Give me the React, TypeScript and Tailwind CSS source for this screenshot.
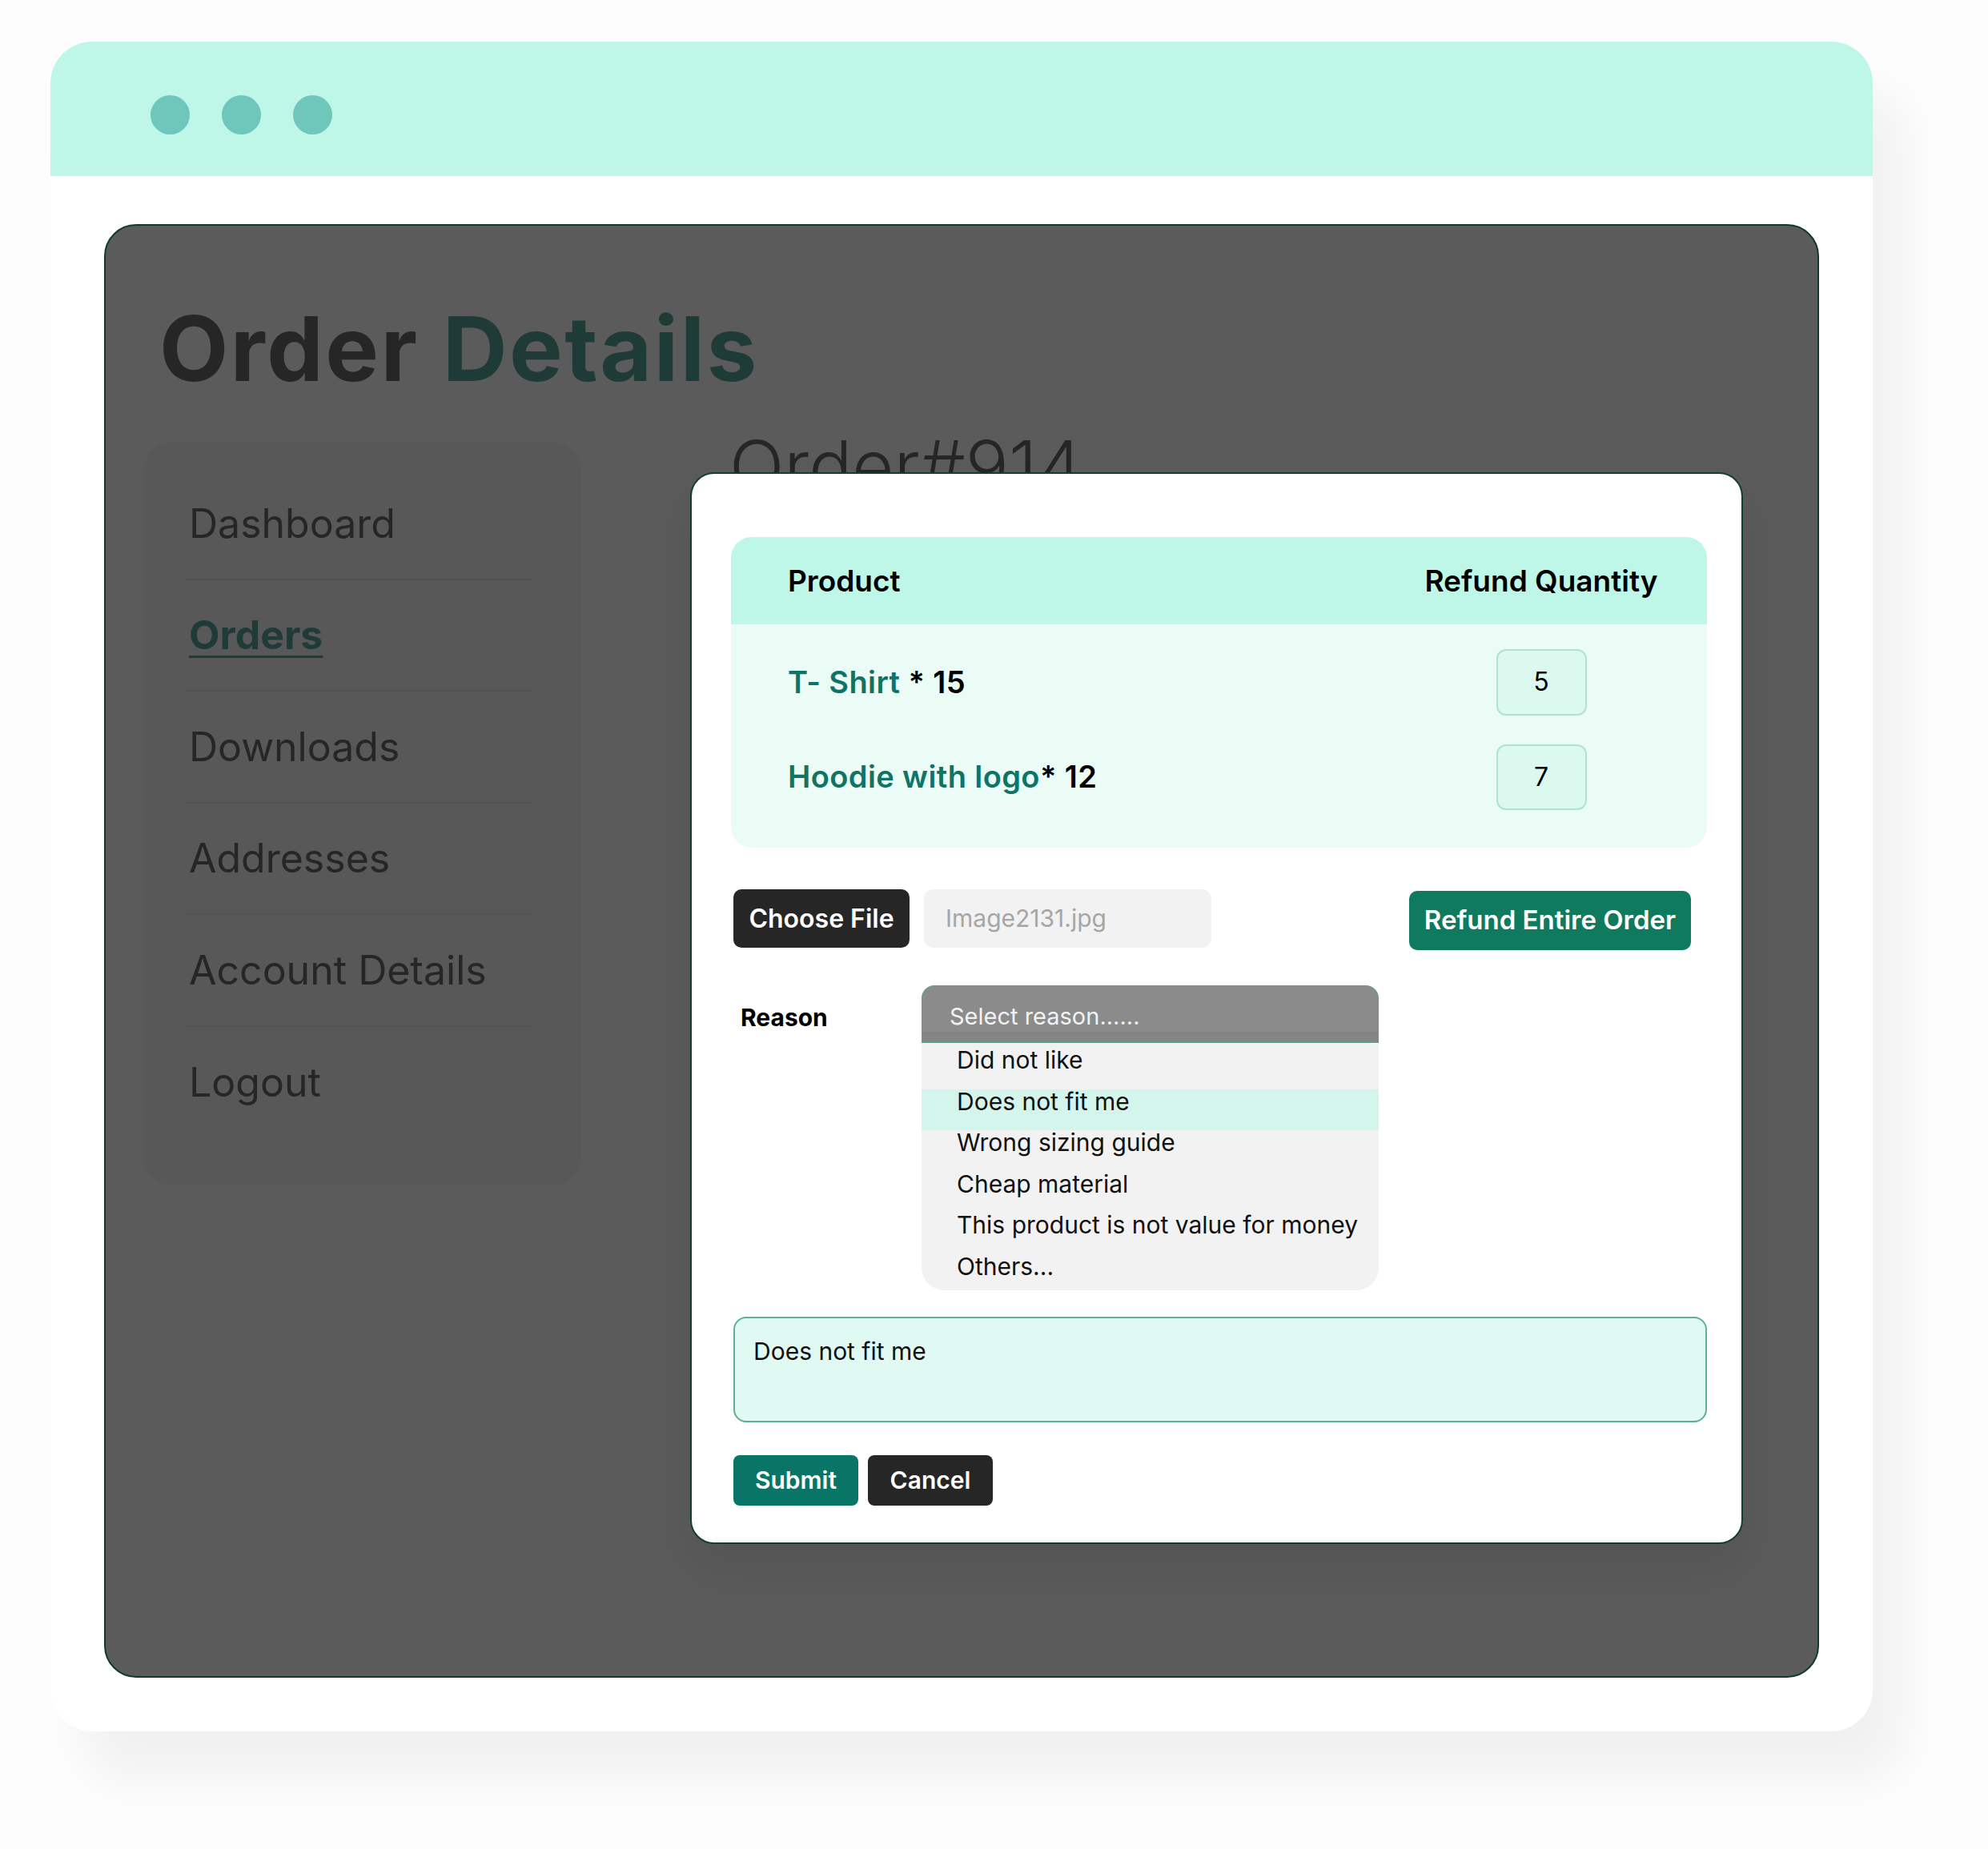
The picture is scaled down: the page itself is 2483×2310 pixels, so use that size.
const menu = ["Dashboard", "Orders", "Downloads", "Addresses", "Account Details", "Logout"];

const reasons = [
  "Did not like",
  "Does not fit me",
  "Wrong sizing guide",
  "Cheap material",
  "This product is not value for money",
  "Others...",
];

const items = [
  { name: "T- Shirt", qty: 15, refund: 5, sep: " * " },
  { name: "Hoodie with logo", qty: 12, refund: 7, sep: "* " },
];

export default function App() {
  return (
    <div className="w-[2483px] h-[2310px] bg-[#fdfdfd] pt-[52px] pl-[63px] font-[Inter,sans-serif]">
      {/* Browser window */}
      <div className="flex w-[2276px] h-[2111px] flex-col overflow-hidden rounded-[52px] bg-white shadow-[40px_60px_60px_rgba(0,0,0,0.05)]">
        <div className="flex h-[168px] shrink-0 items-center gap-[40px] bg-[#bef6e8] pl-[125px] pt-[14px]">
          <span className="h-[49px] w-[49px] rounded-full bg-[#6fc7bb]" />
          <span className="h-[49px] w-[49px] rounded-full bg-[#6fc7bb]" />
          <span className="h-[49px] w-[49px] rounded-full bg-[#6fc7bb]" />
        </div>

        <div className="flex-1 px-[67px] pt-[60px] pb-[67px]">
          {/* Dimmed page */}
          <div className="relative h-full rounded-[40px] border-2 border-[#0d3b2e] bg-[#5b5b5b] pl-[48px] pt-[97px]">
            <h1 className="ml-[19px] text-[112px] font-bold leading-none tracking-[2.5px] text-[#262626]">
              Order <span className="text-[#1f3b37]">Details</span>
            </h1>

            <div className="mt-[48px] flex items-start">
              <nav className="mt-[13px] h-[929px] w-[545px] rounded-[35px] bg-[#585858] pt-[33px] pl-[51px] pr-[60px]">
                {menu.map((m, i) => (
                  <div
                    key={m}
                    className={`flex h-[139.5px] items-center pl-[5px] ${i < menu.length - 1 ? "border-b-2 border-[#525252]" : ""}`}
                  >
                    {m === "Orders" ? (
                      <span className="text-[50px] font-bold leading-none text-[#1f3b37] underline decoration-[3px] underline-offset-[8px]">
                        {m}
                      </span>
                    ) : (
                      <span className="text-[50px] leading-none text-[#262626]">{m}</span>
                    )}
                  </div>
                ))}
              </nav>

              <div className="ml-[186px] -mt-[1px]">
                <h2 className="text-[90px] font-light leading-none text-[#262626]">Order#914</h2>
              </div>
            </div>

            {/* Refund modal */}
            <div className="absolute left-[730px] top-[308px] w-[1315px] rounded-[30px] border-2 border-[#143d33] bg-white pt-[79px] pl-[52px] pr-[43px] pb-[46px] shadow-[0_30px_60px_rgba(0,0,0,0.08)]">
              <div className="-ml-[3px] overflow-hidden rounded-[26px] bg-[#eafcf5]">
                <div className="flex h-[108.5px] items-center justify-between bg-[#bef6e8] pl-[71px] pr-[55px]">
                  <span className="text-[37px] font-semibold text-black">Product</span>
                  <span className="flex w-[304px] justify-center text-[37px] font-semibold text-black">Refund Quantity</span>
                </div>
                <div className="flex flex-col gap-[36px] pt-[31.5px] pb-[47px] pl-[71px] pr-[55px]">
                  {items.map((it) => (
                    <div key={it.name} className="flex h-[82.5px] items-center justify-between">
                      <span className="text-[38px] font-semibold tracking-[0.4px]">
                        <span className="text-[#0f7466]">{it.name}</span>
                        <span className="text-black">{it.sep}{it.qty}</span>
                      </span>
                      <div className="flex w-[304px] justify-center">
                        <div className="flex h-[82.5px] w-[113px] items-center justify-center rounded-[12px] border-2 border-[#ade3d2] bg-[#dcf9f0] text-[32px] text-black">
                          {it.refund}
                        </div>
                      </div>
                    </div>
                  ))}
                </div>
              </div>

              <div className="mt-[52px] flex items-start">
                <button className="h-[73px] w-[220px] rounded-[10px] bg-[#262626] text-[32px] font-semibold text-white">
                  Choose File
                </button>
                <div className="ml-[18px] flex h-[73px] w-[359px] items-center rounded-[12px] bg-[#f2f2f2] pl-[27px] text-[30px] text-[#a6a6a6]">
                  Image2131.jpg
                </div>
                <button className="ml-auto mr-[20px] mt-[2px] h-[74px] w-[352px] rounded-[10px] bg-[#0f7a5e] text-[33px] font-semibold text-white">
                  Refund Entire Order
                </button>
              </div>

              <div className="mt-[44px] flex">
                <div className="flex h-[72px] w-[235px] items-center pl-[9px] pt-[8px] text-[30px] font-bold text-black">Reason</div>
                <div className="w-[571px]">
                  <div className="flex h-[72px] items-center rounded-t-[16px] border border-b-2 border-[#5f9e8c] bg-[linear-gradient(to_bottom,#8b8b8b_0,#8b8b8b_57px,#848484_57px)] pl-[34px] pt-[6px] text-[29px] text-[#f2f2f2]">
                    Select reason......
                  </div>
                  <div className="h-[309px] overflow-hidden rounded-b-[28px] border-t border-white bg-[#f2f2f2] pt-[5px]">
                    {reasons.map((r) => (
                      <div
                        key={r}
                        className={`h-[51.5px] pl-[44px] text-[30px] leading-[30px] text-[#111] ${r === "Does not fit me" ? "bg-[#d4f5ec]" : ""}`}
                      >
                        {r}
                      </div>
                    ))}
                  </div>
                </div>
              </div>

              <div className="mt-[33px] h-[132px] rounded-[16px] border-2 border-[#5fae98] bg-[#e0faf3] pl-[23px] pt-[23px] text-[30px] leading-[36px] text-[#111]">
                Does not fit me
              </div>

              <div className="mt-[41px] flex gap-[12px]">
                <button className="h-[63px] w-[156px] rounded-[8px] bg-[#087566] text-[30px] font-semibold text-white">Submit</button>
                <button className="h-[63px] w-[156px] rounded-[8px] bg-[#262626] text-[30px] font-semibold text-white">Cancel</button>
              </div>
            </div>
          </div>
        </div>
      </div>
    </div>
  );
}
